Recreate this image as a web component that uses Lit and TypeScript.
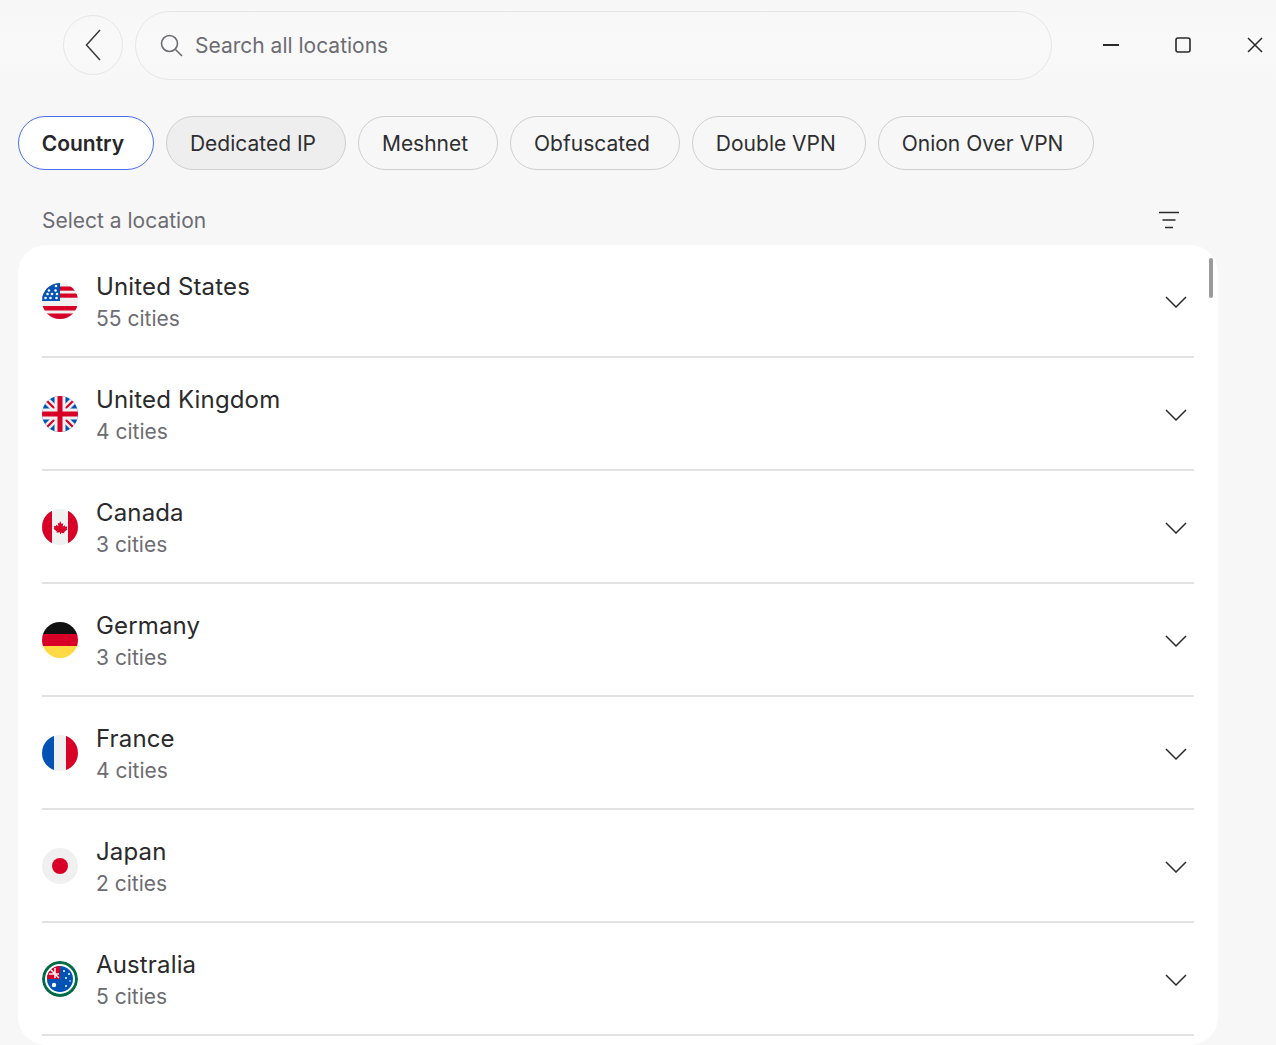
import { LitElement, html, css, svg } from "lit";
import { customElement } from "lit/decorators.js";

const star = (x: number, y: number, r = 1.1, fill = "#fff") =>
  svg`<circle cx=${x} cy=${y} r=${r} fill=${fill}></circle>`;

const flags: Record<string, unknown> = {
  us: svg`<rect width="36" height="36" fill="#f0f0f0"/>
    <rect y="3.5" width="36" height="4.2" fill="#d80027"/><rect y="10.5" width="36" height="4.2" fill="#d80027"/>
    <rect y="23" width="36" height="4.5" fill="#d80027"/><rect y="30.5" width="36" height="5.5" fill="#d80027"/>
    <rect width="18" height="18" fill="#0052b4"/>
    ${[[7, 7.5], [13.5, 7.5], [5.5, 11], [10, 11], [15, 11], [3.5, 15], [8.5, 15], [14.5, 15], [14, 3]].map(([x, y]) => star(x, y, 1.3))}`,
  uk: svg`<rect width="36" height="36" fill="#0052b4"/>
    <path d="M0 0L36 36M36 0L0 36" stroke="#f0f0f0" stroke-width="7"/>
    <path d="M3 3L14 14M33 3L22 14M3 33L14 22M33 33L22 22" stroke="#d80027" stroke-width="2.2"/>
    <rect x="12.5" width="11" height="36" fill="#f0f0f0"/><rect y="12.5" width="36" height="11" fill="#f0f0f0"/>
    <rect x="15.5" width="5" height="36" fill="#d80027"/><rect y="15.5" width="36" height="5" fill="#d80027"/>`,
  ca: svg`<rect width="36" height="36" fill="#f0f0f0"/>
    <rect width="10" height="36" fill="#d80027"/><rect x="26" width="10" height="36" fill="#d80027"/>
    <path d="M18 12l1.6 3 1.6-.8-.6 3.6 2-1.6.7 1.5 2-.3-.7 2.3.9.6-3.4 2.7.4 1.3-3.5-.5V25h-1v-1.7l-3.5.5.4-1.3-3.4-2.7.9-.6-.7-2.3 2 .3.7-1.5 2 1.6-.6-3.6 1.6.8z" fill="#d80027"/>`,
  de: svg`<rect width="36" height="12" fill="#111"/><rect y="12" width="36" height="12" fill="#d80027"/><rect y="24" width="36" height="12" fill="#ffda44"/>`,
  fr: svg`<rect width="12" height="36" fill="#0052b4"/><rect x="12" width="12" height="36" fill="#f0f0f0"/><rect x="24" width="12" height="36" fill="#d80027"/>`,
  jp: svg`<rect width="36" height="36" fill="#f0f0f0"/><circle cx="18" cy="18" r="8" fill="#d80027"/>`,
  au: svg`<rect width="36" height="36" fill="#fff"/><circle cx="18" cy="18" r="16.5" fill="none" stroke="#006b45" stroke-width="3"/>
    <circle cx="18" cy="18" r="13" fill="#0052b4"/>
    <path d="M5 18A13 13 0 0 1 18 5V18z" fill="#d80027"/>
    <path d="M8 8L17 17M13 7V17M7 13H17" stroke="#f0f0f0" stroke-width="1.6"/>
    ${[[22, 10, 1], [27, 13, 1], [24, 17, 1], [28, 20, 0.8], [24, 25, 1]].map(([x, y, r]) => star(x, y, r))}
    ${star(12, 24, 2.2)}`,
};

const rows = [
  ["us", "United States", "55 cities"],
  ["uk", "United Kingdom", "4 cities"],
  ["ca", "Canada", "3 cities"],
  ["de", "Germany", "3 cities"],
  ["fr", "France", "4 cities"],
  ["jp", "Japan", "2 cities"],
  ["au", "Australia", "5 cities"],
];

const chips = ["Country", "Dedicated IP", "Meshnet", "Obfuscated", "Double VPN", "Onion Over VPN"];

@customElement("app-root")
export class AppRoot extends LitElement {
  static styles = css`
    :host {
      display: block;
      width: 1276px;
      height: 1045px;
      overflow: hidden;
      background: #f7f7f8;
      font-family: Inter, "Liberation Sans", sans-serif;
      color: #2a2a2c;
    }
    .top {
      display: flex;
      align-items: center;
      height: 91px;
      padding-left: 63px;
      box-sizing: border-box;
      background: linear-gradient(#f7f7f8, #f9f9fa 50%, #f7f7f8);
    }
    .back {
      flex: none;
      width: 60px;
      height: 60px;
      border-radius: 50%;
      border: 1.5px solid #e6e6e8;
      box-sizing: border-box;
      display: flex;
      align-items: center;
      justify-content: center;
      margin: -1px 12px 0 0;
    }
    .search {
      flex: none;
      width: 917px;
      height: 69px;
      border-radius: 35px;
      border: 1.5px solid #e6e6e8;
      box-sizing: border-box;
      display: flex;
      align-items: center;
      gap: 12px;
      padding: 0 0 1px 23px;
      font-size: 21px;
      color: #6c6c72;
    }
    .win {
      display: flex;
      flex: none;
      margin: -2px 0 0 23px;
    }
    .win div {
      width: 72px;
      height: 24px;
      display: flex;
      align-items: center;
      justify-content: center;
    }
    .chips {
      display: flex;
      gap: 12px;
      padding: 25px 0 0 18px;
    }
    .chip {
      height: 54px;
      box-sizing: border-box;
      border-radius: 27px;
      border: 1.5px solid #cfcfd2;
      padding: 1px 29.2px 0 22.7px;
      display: flex;
      align-items: center;
      font-size: 21px;
      color: #2e2e30;
      white-space: nowrap;
    }
    .chip.sel {
      background: #fff;
      border-color: #4a6df0;
      font-weight: 600;
      color: #26262a;
    }
    .chip.hover {
      background: #eeeeef;
    }
    .head {
      display: flex;
      align-items: center;
      justify-content: space-between;
      height: 75px;
      box-sizing: border-box;
      padding: 25px 97px 0 42px;
      font-size: 21px;
      color: #6c6c72;
    }
    .card {
      position: relative;
      width: 1200px;
      height: 800px;
      margin-left: 18px;
      background: #fff;
      border-radius: 28px;
      overflow: hidden;
    }
    .list {
      padding: 0 24px;
    }
    .row {
      height: 113px;
      box-sizing: border-box;
      border-bottom: 2px solid #e2e2e3;
      display: flex;
      align-items: center;
    }
    .flag {
      width: 36px;
      height: 36px;
      flex: none;
      border-radius: 50%;
      overflow: hidden;
      display: block;
    }
    .txt {
      flex: 1;
      margin-left: 18px;
      padding-top: 4px;
      display: flex;
      flex-direction: column;
      gap: 3px;
    }
    .name {
      font-size: 24px;
      line-height: 30px;
      letter-spacing: 0.15px;
      color: #2a2a2c;
    }
    .sub {
      font-size: 21px;
      line-height: 28px;
      color: #6c6c72;
    }
    .chev {
      margin: 2px 7.5px 0 0;
      display: block;
    }
    .thumb {
      position: absolute;
      left: 1191px;
      top: 13px;
      width: 4px;
      height: 40px;
      border-radius: 2px;
      background: #9a9a9c;
    }
  `;

  render() {
    return html`
      <div class="top">
        <div class="back">
          <svg width="16" height="32" viewBox="0 0 16 32" fill="none" stroke="#3a3a3d" stroke-width="1.5">
            <path d="M15 1L1.5 16L15 31" />
          </svg>
        </div>
        <div class="search">
          <svg width="24" height="24" viewBox="0 0 24 24" fill="none" stroke="#6c6c72" stroke-width="1.6">
            <circle cx="10.5" cy="10.5" r="8" /><path d="M16.5 16.5L23 23" />
          </svg>
          <span>Search all locations</span>
        </div>
        <div class="win">
          <div>
            <svg width="16" height="4" viewBox="0 0 16 4"><rect y="1" width="16" height="2" fill="#2a2a2c" /></svg>
          </div>
          <div>
            <svg width="16" height="16" viewBox="0 0 16 16" fill="none" stroke="#2a2a2c" stroke-width="1.6">
              <rect x="1" y="1" width="14" height="14" rx="2" />
            </svg>
          </div>
          <div>
            <svg width="16" height="16" viewBox="0 0 16 16" fill="none" stroke="#2a2a2c" stroke-width="1.5">
              <path d="M1 1L15 15M15 1L1 15" />
            </svg>
          </div>
        </div>
      </div>
      <div class="chips">
        ${chips.map(
          (c, i) => html`<div class="chip ${i === 0 ? "sel" : i === 1 ? "hover" : ""}">${c}</div>`
        )}
      </div>
      <div class="head">
        <span>Select a location</span>
        <svg width="20" height="18" viewBox="0 0 20 18" stroke="#2a2a2c" stroke-width="1.5">
          <path d="M0 1.5H20M3.5 9H16.5M6 16.5H14" />
        </svg>
      </div>
      <div class="card">
        <div class="list">
          ${rows.map(
            ([f, n, s]) => html`<div class="row">
              <svg class="flag" viewBox="0 0 36 36">${flags[f]}</svg>
              <div class="txt">
                <div class="name">${n}</div>
                <div class="sub">${s}</div>
              </div>
              <svg class="chev" width="22" height="12" viewBox="0 0 22 12" fill="none" stroke="#2a2a2c" stroke-width="1.5">
                <path d="M1 1L11 11L21 1" />
              </svg>
            </div>`
          )}
        </div>
        <div class="thumb"></div>
      </div>
    `;
  }
}
